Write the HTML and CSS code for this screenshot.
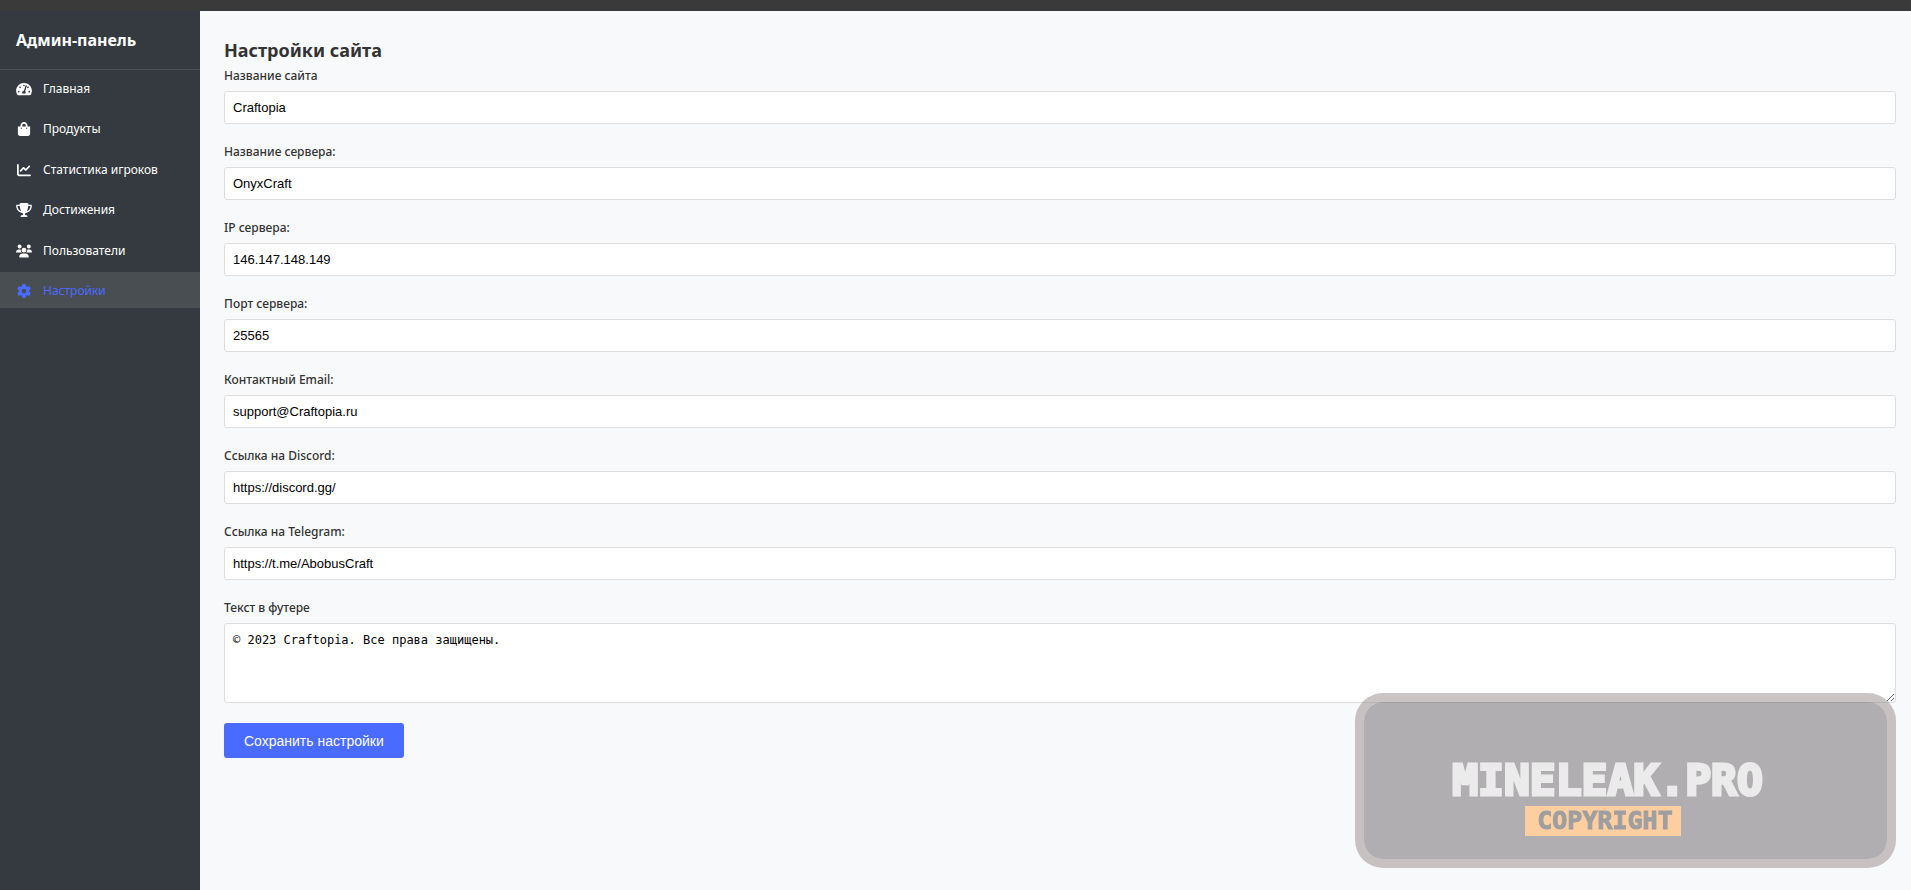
FILE: index.html
```html
<!DOCTYPE html>
<html lang="ru">
<head>
    <meta charset="UTF-8">
    <title>Настройки сайта</title>
    <link rel="stylesheet" href="styles.css">
</head>
<body>
<div class="topbar"></div>
<div class="layout">
    <aside class="sidebar">
        <h2 class="sidebar-title">Админ-панель</h2>
        <nav class="menu">
            <a href="#">
                <svg viewBox="0 0 576 512"><path d="M288 32C128.94 32 0 160.94 0 320c0 52.8 14.25 102.26 39.06 144.8 5.61 9.62 16.3 15.2 27.44 15.2h443c11.14 0 21.83-5.58 27.44-15.2C561.75 422.26 576 372.8 576 320c0-159.06-128.94-288-288-288zm0 64c14.71 0 26.58 10.13 30.32 23.65-1.11 2.26-2.64 4.23-3.45 6.67l-9.22 27.67c-5.13 3.49-10.97 6.01-17.64 6.01-17.67 0-32-14.33-32-32S270.33 96 288 96zM96 384c-17.67 0-32-14.33-32-32s14.33-32 32-32 32 14.33 32 32-14.33 32-32 32zm48-160c-17.67 0-32-14.33-32-32s14.33-32 32-32 32 14.33 32 32-14.33 32-32 32zm246.77-72.41l-61.33 184C343.13 347.33 352 364.54 352 384c0 11.72-3.38 22.55-8.88 32H232.88c-5.5-9.45-8.88-20.28-8.88-32 0-33.94 26.5-61.43 59.9-63.59l61.34-184.01c4.17-12.56 17.73-19.45 30.36-15.17 12.57 4.19 19.35 17.79 15.17 30.36zM432 160a32 32 0 1 1 0 64 32 32 0 1 1 0-64zM480 320a32 32 0 1 1 0 64 32 32 0 1 1 0-64z"/></svg>
                <span>Главная</span>
            </a>
            <a href="#">
                <svg viewBox="0 0 448 512"><path d="M352 160v-32C352 57.42 294.579 0 224 0 153.42 0 96 57.42 96 128v32H0v272c0 44.183 35.817 80 80 80h288c44.183 0 80-35.817 80-80V160h-96zm-192-32c0-35.29 28.71-64 64-64s64 28.71 64 64v32H160v-32zm160 120c-13.255 0-24-10.745-24-24s10.745-24 24-24 24 10.745 24 24-10.745 24-24 24zm-192 0c-13.255 0-24-10.745-24-24s10.745-24 24-24 24 10.745 24 24-10.745 24-24 24z"/></svg>
                <span>Продукты</span>
            </a>
            <a href="#">
                <svg viewBox="0 0 512 512"><path d="M64 64c0-17.7-14.3-32-32-32S0 46.3 0 64V400c0 44.2 35.8 80 80 80H480c17.7 0 32-14.3 32-32s-14.3-32-32-32H80c-8.8 0-16-7.2-16-16V64zm406.6 86.6c12.5-12.5 12.5-32.8 0-45.3s-32.8-12.5-45.3 0L320 210.7l-57.4-57.4c-12.5-12.5-32.8-12.5-45.3 0l-112 112c-12.5 12.5-12.5 32.8 0 45.3s32.8 12.5 45.3 0L240 221.3l57.4 57.4c12.5 12.5 32.8 12.5 45.3 0l128-128z"/></svg>
                <span>Статистика игроков</span>
            </a>
            <a href="#">
                <svg viewBox="0 0 576 512"><path d="M400 0H176c-26.5 0-48.1 21.8-47.1 48.2c.2 5.3 .4 10.6 .7 15.8H24C10.7 64 0 74.7 0 88c0 92.6 33.5 157 78.5 200.7c44.3 43.1 98.3 64.8 138.1 75.8c23.4 6.5 39.4 26 39.4 45.6c0 20.9-17 37.9-37.9 37.9H192c-17.7 0-32 14.3-32 32s14.3 32 32 32H384c17.7 0 32-14.3 32-32s-14.3-32-32-32H357.9C337 448 320 431 320 410.1c0-19.6 15.9-39.2 39.4-45.6c39.9-11 93.9-32.7 138.2-75.8C542.5 245 576 180.6 576 88c0-13.3-10.7-24-24-24H446.4c.3-5.2 .5-10.4 .7-15.8C448.1 21.8 426.5 0 400 0zM48.9 112h84.4c9.1 90.1 29.2 150.3 51.9 190.6c-24.9-11-50.8-26.5-73.2-48.3c-32-31.1-58-76-63-142.3zM464.1 254.3c-22.4 21.8-48.3 37.3-73.2 48.3c22.7-40.3 42.8-100.5 51.9-190.6h84.4c-5.1 66.3-31.1 111.2-63 142.3z"/></svg>
                <span>Достижения</span>
            </a>
            <a href="#">
                <svg viewBox="0 0 640 512"><path d="M144 0a80 80 0 1 1 0 160A80 80 0 1 1 144 0zM512 0a80 80 0 1 1 0 160A80 80 0 1 1 512 0zM0 298.7C0 239.8 47.8 192 106.7 192h42.7c15.9 0 31 3.5 44.6 9.7c-1.3 7.2-1.9 14.7-1.9 22.3c0 38.2 16.8 72.5 43.3 96c-.2 0-.4 0-.7 0H21.3C9.6 320 0 310.4 0 298.7zM405.3 320c-.2 0-.4 0-.7 0c26.6-23.5 43.3-57.8 43.3-96c0-7.6-.7-15-1.9-22.3c13.6-6.3 28.7-9.7 44.6-9.7h42.7C592.2 192 640 239.8 640 298.7c0 11.8-9.6 21.3-21.3 21.3H405.3zM224 224a96 96 0 1 1 192 0 96 96 0 1 1-192 0zM128 485.3C128 411.7 187.7 352 261.3 352H378.7C452.3 352 512 411.7 512 485.3c0 14.7-11.9 26.7-26.7 26.7H154.7c-14.7 0-26.7-11.9-26.7-26.7z"/></svg>
                <span>Пользователи</span>
            </a>
            <a href="#" class="active">
                <svg viewBox="0 0 512 512"><path d="M495.9 166.6c3.2 8.7 .5 18.4-6.4 24.6l-43.3 39.4c1.1 8.3 1.7 16.8 1.7 25.4s-.6 17.1-1.7 25.4l43.3 39.4c6.9 6.2 9.6 15.9 6.4 24.6c-4.4 11.9-9.7 23.3-15.8 34.3l-4.7 8.1c-6.6 11-14 21.4-22.1 31.2c-5.9 7.2-15.7 9.6-24.5 6.8l-55.7-17.7c-13.4 10.3-28.2 18.9-44 25.4l-12.5 57.1c-2 9.1-9 16.3-18.2 17.8c-13.8 2.3-28 3.5-42.5 3.5s-28.7-1.2-42.5-3.5c-9.2-1.5-16.2-8.7-18.2-17.8l-12.5-57.1c-15.8-6.5-30.6-15.1-44-25.4L83.1 425.9c-8.8 2.8-18.6 .3-24.5-6.8c-8.1-9.8-15.5-20.2-22.1-31.2l-4.7-8.1c-6.1-11-11.4-22.4-15.8-34.3c-3.2-8.7-.5-18.4 6.4-24.6l43.3-39.4C64.6 273.1 64 264.6 64 256s.6-17.1 1.7-25.4L22.4 191.2c-6.9-6.2-9.6-15.9-6.4-24.6c4.4-11.9 9.7-23.3 15.8-34.3l4.7-8.1c6.6-11 14-21.4 22.1-31.2c5.9-7.2 15.7-9.6 24.5-6.8l55.7 17.7c13.4-10.3 28.2-18.9 44-25.4l12.5-57.1c2-9.1 9-16.3 18.2-17.8C227.3 1.2 241.5 0 256 0s28.7 1.2 42.5 3.5c9.2 1.5 16.2 8.7 18.2 17.8l12.5 57.1c15.8 6.5 30.6 15.1 44 25.4l55.7-17.7c8.8-2.8 18.6-.3 24.5 6.8c8.1 9.8 15.5 20.2 22.1 31.2l4.7 8.1c6.1 11 11.4 22.4 15.8 34.3zM256 336a80 80 0 1 0 0-160 80 80 0 1 0 0 160z"/></svg>
                <span>Настройки</span>
            </a>
        </nav>
    </aside>
    <main class="content">
        <h1>Настройки сайта</h1>
        <form>
            <div class="form-group">
                <label for="site_name">Название сайта</label>
                <input type="text" id="site_name" value="Craftopia">
            </div>
            <div class="form-group">
                <label for="server_name">Название сервера:</label>
                <input type="text" id="server_name" value="OnyxCraft">
            </div>
            <div class="form-group">
                <label for="server_ip">IP сервера:</label>
                <input type="text" id="server_ip" value="146.147.148.149">
            </div>
            <div class="form-group">
                <label for="server_port">Порт сервера:</label>
                <input type="text" id="server_port" value="25565">
            </div>
            <div class="form-group">
                <label for="email">Контактный Email:</label>
                <input type="email" id="email" value="support@Craftopia.ru">
            </div>
            <div class="form-group">
                <label for="discord">Ссылка на Discord:</label>
                <input type="text" id="discord" value="https://discord.gg/">
            </div>
            <div class="form-group">
                <label for="telegram">Ссылка на Telegram:</label>
                <input type="text" id="telegram" value="https://t.me/AbobusCraft">
            </div>
            <div class="form-group">
                <label for="footer_text">Текст в футере</label>
                <textarea id="footer_text" spellcheck="false">© 2023 Craftopia. Все права защищены.</textarea>
            </div>
            <button type="button" class="btn">Сохранить настройки</button>
        </form>
    </main>
</div>
<div class="watermark">
    <div class="watermark-name">MINELEAK.PRO</div>
    <div class="watermark-tag">COPYRIGHT</div>
</div>
</body>
</html>
```
FILE: styles.css
```css
*{
    box-sizing: border-box;
    margin: 0;
    padding: 0;
}
body{
    display: flex;
    flex-direction: column;
    min-height: 100vh;
    font-family: "Segoe UI", "Noto Sans", sans-serif;
    font-size: 12px;
    line-height: 16px;
    color: #333;
    background: #f8f9fb;
}
.topbar{
    height: 11px;
    background: #3a3a3a;
}
.layout{
    display: flex;
    flex: 1;
}
.sidebar{
    width: 200px;
    background: #343a40;
    color: #fff;
}
.sidebar-title{
    padding: 17px 16px;
    font-size: 16px;
    line-height: 24px;
    border-bottom: 1px solid #4b5157;
}
.menu{
    display: flex;
    flex-direction: column;
    justify-content: space-between;
    height: 238px;
}
.menu a{
    display: flex;
    align-items: center;
    gap: 11px;
    padding: 11px 16px 9px;
    color: #fff;
    text-decoration: none;
}
.menu a.active{
    background: #494e52;
    color: #4a6bff;
}
.menu svg{
    width: 16px;
    height: 14px;
    fill: currentColor;
}
.content{
    flex: 1;
    padding: 27px 15px 27px 24px;
}
h1{
    font-size: 18px;
    line-height: 24px;
    margin-bottom: 6px;
}
.form-group{
    margin-bottom: 20px;
}
.form-group label{
    display: block;
    margin-bottom: 7px;
    font-weight: 500;
}
.form-group input,
.form-group textarea{
    display: block;
    width: 100%;
    padding: 8px;
    border: 1px solid #ddd;
    border-radius: 3px;
    background: #fff;
    color: #000;
}
.form-group input{
    height: 33px;
    font-family: "Liberation Sans", Arial, sans-serif;
    font-size: 13px;
}
.form-group textarea{
    height: 80px;
    font-family: Consolas, "DejaVu Sans Mono", monospace;
    font-size: 12px;
    line-height: 16px;
    resize: vertical;
}
.btn{
    height: 35px;
    padding: 0 20px;
    border: none;
    border-radius: 3px;
    background: #4a6bff;
    color: #fff;
    font-family: "Liberation Sans", Arial, sans-serif;
    font-size: 14px;
    cursor: pointer;
}
.watermark{
    position: fixed;
    right: 15px;
    bottom: 22px;
    display: flex;
    flex-direction: column;
    align-items: center;
    width: 541px;
    height: 175px;
    padding: 52px 44px 0 8px;
    border: 9px solid rgba(150, 138, 138, 0.5);
    border-radius: 28px;
    background: rgba(104, 100, 102, 0.5);
    background-clip: padding-box;
    font-family: "DejaVu Sans Mono", monospace;
    font-weight: bold;
    pointer-events: none;
}
.watermark-name{
    font-size: 43px;
    line-height: 52px;
    color: #ebebeb;
    -webkit-text-stroke: 3px #ebebeb;
}
.watermark-tag{
    margin-right: 9px;
    padding: 0 8px 0 12px;
    font-size: 25px;
    line-height: 30px;
    color: #9f9f9f;
    background: #fccea0;
    -webkit-text-stroke: 1px #9f9f9f;
}
```
